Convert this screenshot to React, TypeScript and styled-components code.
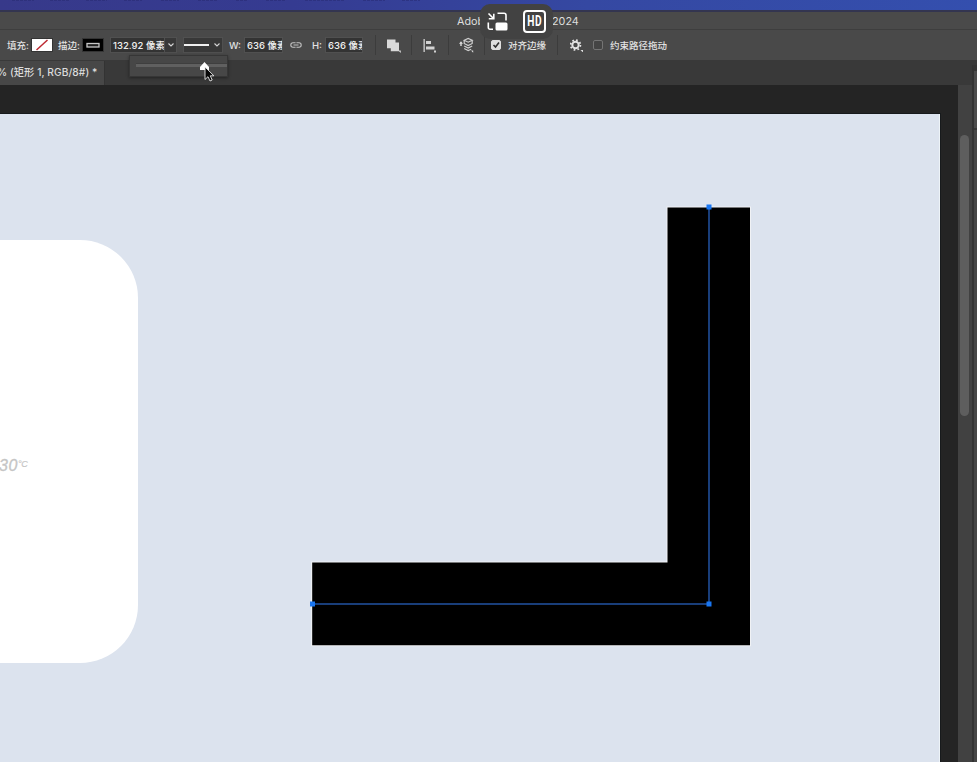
import React from "react";
import styled, { createGlobalStyle } from "styled-components";

const Global = createGlobalStyle`
  * { box-sizing: border-box; }
  body { margin: 0; overflow: hidden; background: #242424; font-family: Inter, "Noto Sans CJK SC", sans-serif; }
  svg { display: block; flex: none; }
`;

const Window = styled.div`
  position: relative;
  width: 977px;
  height: 762px;
  display: flex;
  flex-direction: column;
  overflow: hidden;
`;

const MenuBar = styled.div`
  flex: none;
  height: 12px;
  background: linear-gradient(90deg, #37398a 0%, #353b91 30%, #3548a2 60%, #344fae 100%);
  border-bottom: 2px solid #333550;
`;

const TitleBar = styled.div`
  flex: none;
  height: 18px;
  display: flex;
  align-items: center;
  padding: 2px 0 0 457px;
  background: #4a4a4a;
  border-bottom: 1px solid #3e3e3e;
  color: #dedede;
  font-size: 10.8px;
  line-height: 15px;
  white-space: nowrap;
`;

const TitlePart = styled.span<{ $width: number }>`
  width: ${(p) => p.$width}px;
`;

const OptionsBar = styled.div`
  flex: none;
  height: 31px;
  display: flex;
  align-items: center;
  padding-left: 7px;
  background: #494949;
  border-bottom: 1px solid #393939;
`;

const Label = styled.span<{ $width: number; $gap?: number }>`
  flex: none;
  width: ${(p) => p.$width}px;
  margin-right: ${(p) => p.$gap ?? 0}px;
  padding-top: 1px;
  color: #e2e2e2;
  font-size: 9.5px;
  font-weight: 500;
  line-height: 14px;
  white-space: nowrap;
`;

const Swatch = styled.div<{ $fill: string; $gap: number }>`
  flex: none;
  display: flex;
  align-items: center;
  justify-content: center;
  width: 22px;
  height: 14px;
  margin-right: ${(p) => p.$gap}px;
  border: 1px solid #343434;
  background: ${(p) => p.$fill};
`;

const Field = styled.div<{ $width: number; $gap: number }>`
  flex: none;
  width: ${(p) => p.$width}px;
  height: 14px;
  margin-right: ${(p) => p.$gap}px;
  padding-left: 2px;
  overflow: hidden;
  background: #333;
  outline: 1px solid #505050;
  color: #efefef;
  font-size: 9.5px;
  font-weight: 500;
  line-height: 15px;
  white-space: nowrap;
`;

const Picker = styled.div<{ $width: number; $gap: number }>`
  flex: none;
  display: flex;
  align-items: center;
  justify-content: flex-end;
  gap: 4px;
  width: ${(p) => p.$width}px;
  height: 14px;
  padding-right: 1px;
  margin-right: ${(p) => p.$gap}px;
  background: #383838;
  outline: 1px solid #505050;
`;

const StrokeSample = styled.span`
  width: 25px;
  height: 2px;
  background: #efefef;
`;

const Tool = styled.div<{ $width: number; $gap: number }>`
  flex: none;
  width: ${(p) => p.$width}px;
  margin-right: ${(p) => p.$gap}px;
`;

const Divider = styled.i<{ $gap: number }>`
  flex: none;
  width: 1px;
  height: 20px;
  margin-right: ${(p) => p.$gap}px;
  background: #3c3c3c;
`;

const Check = styled.div<{ $on?: boolean; $gap: number }>`
  flex: none;
  width: 10px;
  height: 10px;
  margin-right: ${(p) => p.$gap}px;
  border-radius: 2px;
  border: 1px solid ${(p) => (p.$on ? "#dfdfdf" : "#747474")};
  background: ${(p) => (p.$on ? "#dfdfdf" : "#444")};
`;

const TabBar = styled.div`
  flex: none;
  height: 24px;
  display: flex;
  background: #393939;
`;

const Tab = styled.div`
  width: 105px;
  background: #474747;
  border-right: 1px solid #333;
  color: #dcdcdc;
  font-size: 10.2px;
  font-weight: 500;
  line-height: 22px;
  white-space: nowrap;
  letter-spacing: 0.08px;
  text-indent: -3px;
`;

const Workspace = styled.div`
  flex: 1;
  display: flex;
  background: #242424;
`;

const Artboard = styled.div`
  position: relative;
  flex: none;
  width: 940px;
  margin-top: 29px;
  background: #dce3ee;
  border-right: 1px solid #edf3f7;
  outline: 1px solid #171a1c;
  overflow: hidden;
`;

const Card = styled.div`
  position: absolute;
  left: -280px;
  top: 126px;
  width: 418px;
  height: 423px;
  border-radius: 58px;
  background: #fff;
`;

const Temperature = styled.div`
  position: absolute;
  left: 279px;
  top: 216px;
  display: flex;
  align-items: flex-start;
  font-family: "Liberation Sans", sans-serif;
  font-size: 16px;
  font-style: italic;
  line-height: 20px;
  letter-spacing: 0.6px;
  color: #c5c5c5;
  -webkit-text-stroke: 0.3px #c5c5c5;
`;

const Degree = styled.span`
  font-size: 9px;
  line-height: 16px;
  letter-spacing: -0.4px;
  -webkit-text-stroke: 0.2px #c5c5c5;
`;

const ShapeLayer = styled.svg`
  position: absolute;
  left: 308px;
  top: 88px;
`;

const ScrollTrack = styled.div`
  width: 14px;
  margin-left: 18px;
  padding: 50px 3px 0 2px;
  background: #414141;
`;

const ScrollThumb = styled.div`
  height: 281px;
  border-radius: 5px;
  background: #5e5e5e;
`;

const PanelEdge = styled.div`
  position: absolute;
  right: 0;
  top: 65px;
  bottom: 0;
  width: 5px;
  border-left: 2px solid #333;
  border-top: 6px solid #353535;
  background: linear-gradient(#4b4b4b 57px, #383838 57px, #383838 59px, #454545 59px);
`;

const WidthSlider = styled.div`
  position: absolute;
  left: 129px;
  top: 55px;
  width: 99px;
  height: 22px;
  padding: 7px 0 0 6px;
  background: #474747;
  border: 1px solid #363636;
  box-shadow: 0 1px 3px rgba(0, 0, 0, 0.4);
`;

const SliderTrack = styled.div`
  height: 4px;
  border-top: 1px solid #3f3f3f;
  background: #606060;
`;

const Pointer = styled.svg`
  position: absolute;
  left: 198px;
  top: 60px;
`;

const MediaControls = styled.div`
  position: absolute;
  left: 480px;
  top: 4px;
  width: 73px;
  height: 35px;
  display: flex;
  align-items: center;
  gap: 14px;
  padding-left: 7px;
  border-radius: 10px;
  background: #424242;
`;

const HdBadge = styled.div`
  width: 23px;
  height: 23px;
  border: 2px solid #fff;
  border-radius: 4px;
  display: flex;
  align-items: center;
  justify-content: center;
  color: #fff;
`;

const HdText = styled.span`
  font-family: Roboto, sans-serif;
  font-weight: 700;
  font-size: 14.5px;
  line-height: 19px;
  letter-spacing: 0.8px;
  margin-right: -0.8px;
  transform: scaleX(0.7);
`;

const Chevron = () => (
  <svg width="8" height="6" viewBox="0 0 8 6" fill="none" stroke="#d5d5d5" strokeWidth="1.1">
    <path d="M1.5 1.5 4 4 6.5 1.5" />
  </svg>
);

const MenuRemnants = () => (
  <svg width="420" height="2" viewBox="0 0 420 2" stroke="#272a70" strokeWidth="1.4" opacity=".65">
    <path d="M12 0h22M50 0h20M86 0h21M124 0h18M161 0h18M198 0h20M236 0h11M266 0h20M305 0h39M363 0h22M402 0h18" strokeDasharray="3 1" />
  </svg>
);

export default function App() {
  return (
    <>
      <Global />
      <Window>
        <MenuBar><MenuRemnants /></MenuBar>
        <TitleBar>
          <TitlePart $width={95}>Adobe</TitlePart>
          <TitlePart $width={40}>2024</TitlePart>
        </TitleBar>
        <OptionsBar>
          <Label $width={24}>填充:</Label>
          <Swatch $fill="#fff" $gap={5}>
            <svg width="20" height="12"><path d="M4.5 11 15.5 1" stroke="#bd2931" strokeWidth="1.5" /></svg>
          </Swatch>
          <Label $width={24}>描边:</Label>
          <Swatch $fill="#000" $gap={7}>
            <svg width="20" height="12"><rect x="4" y="4.5" width="12" height="3.5" fill="#202020" stroke="#c8c8c8" strokeWidth="1.3" /></svg>
          </Swatch>
          <Field $width={53} $gap={1}>132.92 像素</Field>
          <Picker $width={11} $gap={8}><Chevron /></Picker>
          <Picker $width={38} $gap={7}><StrokeSample /><Chevron /></Picker>
          <Label $width={16}>W:</Label>
          <Field $width={37} $gap={8}>636 像素</Field>
          <Tool $width={12} $gap={10}>
            <svg width="12" height="8" fill="none" stroke="#c2c2c2" strokeWidth="1.1">
              <path d="M5 2.3V1.8H3a2.2 2.2 0 0 0 0 4.4h2v-.5M7 2.3V1.8h2a2.2 2.2 0 0 1 0 4.4H7v-.5M3.5 4h5" />
            </svg>
          </Tool>
          <Label $width={14}>H:</Label>
          <Field $width={36} $gap={13}>636 像素</Field>
          <Divider $gap={11} />
          <Tool $width={14} $gap={10}>
            <svg width="15" height="15" fill="#d9d9d9"><path d="M0 1.5h8.5v3H12v8.8H3.8v-3H0zM11.2 12.5h2.6v2.5z" /></svg>
          </Tool>
          <Divider $gap={11} />
          <Tool $width={14} $gap={11}>
            <svg width="15" height="15" fill="#d3d3d3"><path d="M.5 1h1.3v13H.5zM3 3h5v3H3zM3 8.5h8.5v3H3zM11 12.5h2v2h-2z" /></svg>
          </Tool>
          <Divider $gap={9} />
          <Tool $width={16} $gap={10}>
            <svg width="17" height="16" viewBox="0 0 17 16" fill="none" stroke="#cfcfcf" strokeWidth="1.2">
              <path d="M1 6.8 3 4.3l2 2.5H3.7V9H2.3V6.8z" fill="#dedede" stroke="none" />
              <path d="m6.2 3.2 4-1.8 4 1.8-4 2zM6.2 3.2v3.3l4 2 4-2V3.2M6.2 9l4 2 4-2M6.2 11.5l4 2 3-1.3" />
              <path d="M13 13.5h2.2v2.2z" fill="#ddd" stroke="none" />
            </svg>
          </Tool>
          <Divider $gap={6} />
          <Check $on $gap={7}>
            <svg width="8" height="8" fill="none" stroke="#303030" strokeWidth="1.6"><path d="m1.5 4 2 2L7 1.5" /></svg>
          </Check>
          <Label $width={39} $gap={10}>对齐边缘</Label>
          <Divider $gap={12} />
          <Tool $width={15} $gap={8}>
            <svg width="15" height="14" viewBox="0 0 15 14">
              <circle cx="5.5" cy="7" r="3.2" fill="none" stroke="#e3e3e3" strokeWidth="2" />
              <circle cx="5.5" cy="7" r="4.9" fill="none" stroke="#e3e3e3" strokeWidth="1.8" strokeDasharray="1.7 2.148" />
              <path d="M10.5 12h2.5v2.5z" fill="#ddd" />
            </svg>
          </Tool>
          <Check $gap={7} />
          <Label $width={60}>约束路径拖动</Label>
        </OptionsBar>
        <TabBar><Tab>% (矩形 1, RGB/8#) *</Tab></TabBar>
        <Workspace>
          <Artboard>
            <Card><Temperature>30<Degree>°C</Degree></Temperature></Card>
            <ShapeLayer width="448" height="450" viewBox="308 202 448 450">
              <path d="M667.5 207.5H750V645.2H312.2V562.5H667.5z" fill="#000" stroke="#f0f2f5" strokeWidth="2" paintOrder="stroke" />
              <path d="M709 207V604H312" fill="none" stroke="#193e7a" strokeWidth="2" />
              <path d="M706.5 204.5h5v5h-5zM706.5 601.5h5v5h-5zM310 601.5h5v5h-5z" fill="#1976f2" />
            </ShapeLayer>
          </Artboard>
          <ScrollTrack><ScrollThumb /></ScrollTrack>
        </Workspace>
        <PanelEdge />
        <WidthSlider><SliderTrack /></WidthSlider>
        <Pointer width="18" height="24" viewBox="0 0 18 24">
          <path d="m6.5 2 4.5 5v3H2V7z" fill="#fff" />
          <path d="M7 7v12.5l3-2.8 2 4.3 2.2-1-1.9-4.2h3.6z" fill="#090909" stroke="#e9e9e9" strokeWidth=".9" />
        </Pointer>
        <MediaControls>
          <svg width="22" height="20" viewBox="0 0 22 20" fill="none" stroke="#fff" strokeWidth="1.6">
            <path d="m1.5 1.5 5 5M1.8 6.8h5V1.8M10.5 1.3H17a2 2 0 0 1 2 2V8.5M1.3 10.5v5a1.7 1.7 0 0 0 1.7 1.7h3" />
            <rect x="8.5" y="10.5" width="12" height="8" rx="1.5" fill="#fff" stroke="none" />
          </svg>
          <HdBadge><HdText>HD</HdText></HdBadge>
        </MediaControls>
      </Window>
    </>
  );
}
